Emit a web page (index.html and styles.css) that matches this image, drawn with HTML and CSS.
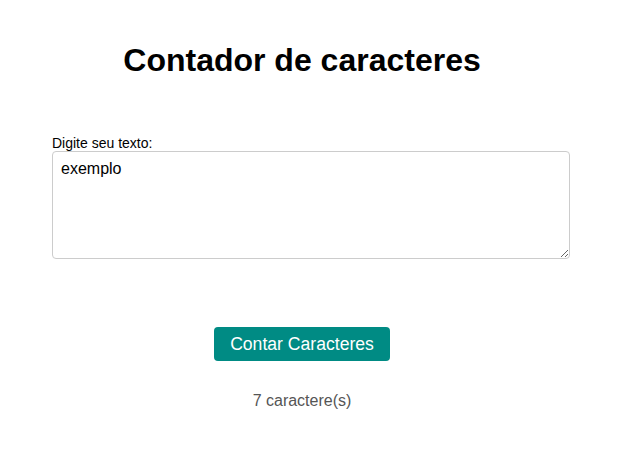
FILE: index.html
```html
<!DOCTYPE html>
<html lang="pt">
<head>
<meta charset="utf-8">
<title>Contador de caracteres</title>
<link rel="stylesheet" href="styles.css">
</head>
<body>
<main class="container">
  <h1 class="title">Contador de caracteres</h1>
  <label class="label" for="texto">Digite seu texto:</label>
  <textarea id="texto" class="input">exemplo</textarea>
  <div class="actions">
    <button class="btn" type="button">Contar Caracteres</button>
  </div>
  <p class="result">7 caractere(s)</p>
</main>
</body>
</html>
```

FILE: styles.css
```css
html, body {
  margin: 0;
  padding: 0;
  background: #fff;
}
body {
  font-family: "Liberation Sans", Arial, sans-serif;
  color: #000;
}
.container {
  width: 500px;
  margin-left: 52px;
  padding-top: 21px;
  display: flex;
  flex-direction: column;
}
.title {
  font-size: 32px;
  font-weight: bold;
  text-align: center;
  margin: 21px 0 0;
  line-height: 37px;
}
.label {
  font-size: 14px;
  line-height: 16px;
  margin-top: 56px;
}
.input {
  width: 500px;
  height: 90px;
  padding: 8px;
  border: 1px solid #ccc;
  border-radius: 4px;
  font-family: "Liberation Sans", Arial, sans-serif;
  font-size: 16px;
  line-height: 18px;
  color: #000;
  resize: vertical;
  margin: 0;
  box-sizing: content-box;
}
.actions {
  display: flex;
  justify-content: center;
  margin-top: 68px;
}
.btn {
  background: #008b84;
  color: #fff;
  border: none;
  border-radius: 4px;
  font-family: "Liberation Sans", Arial, sans-serif;
  font-size: 17.6px;
  height: 34px;
  width: 176px;
  padding: 0;
}
.result {
  margin: 31px 0 0;
  text-align: center;
  font-size: 16px;
  line-height: 18px;
  color: #555;
}
```
